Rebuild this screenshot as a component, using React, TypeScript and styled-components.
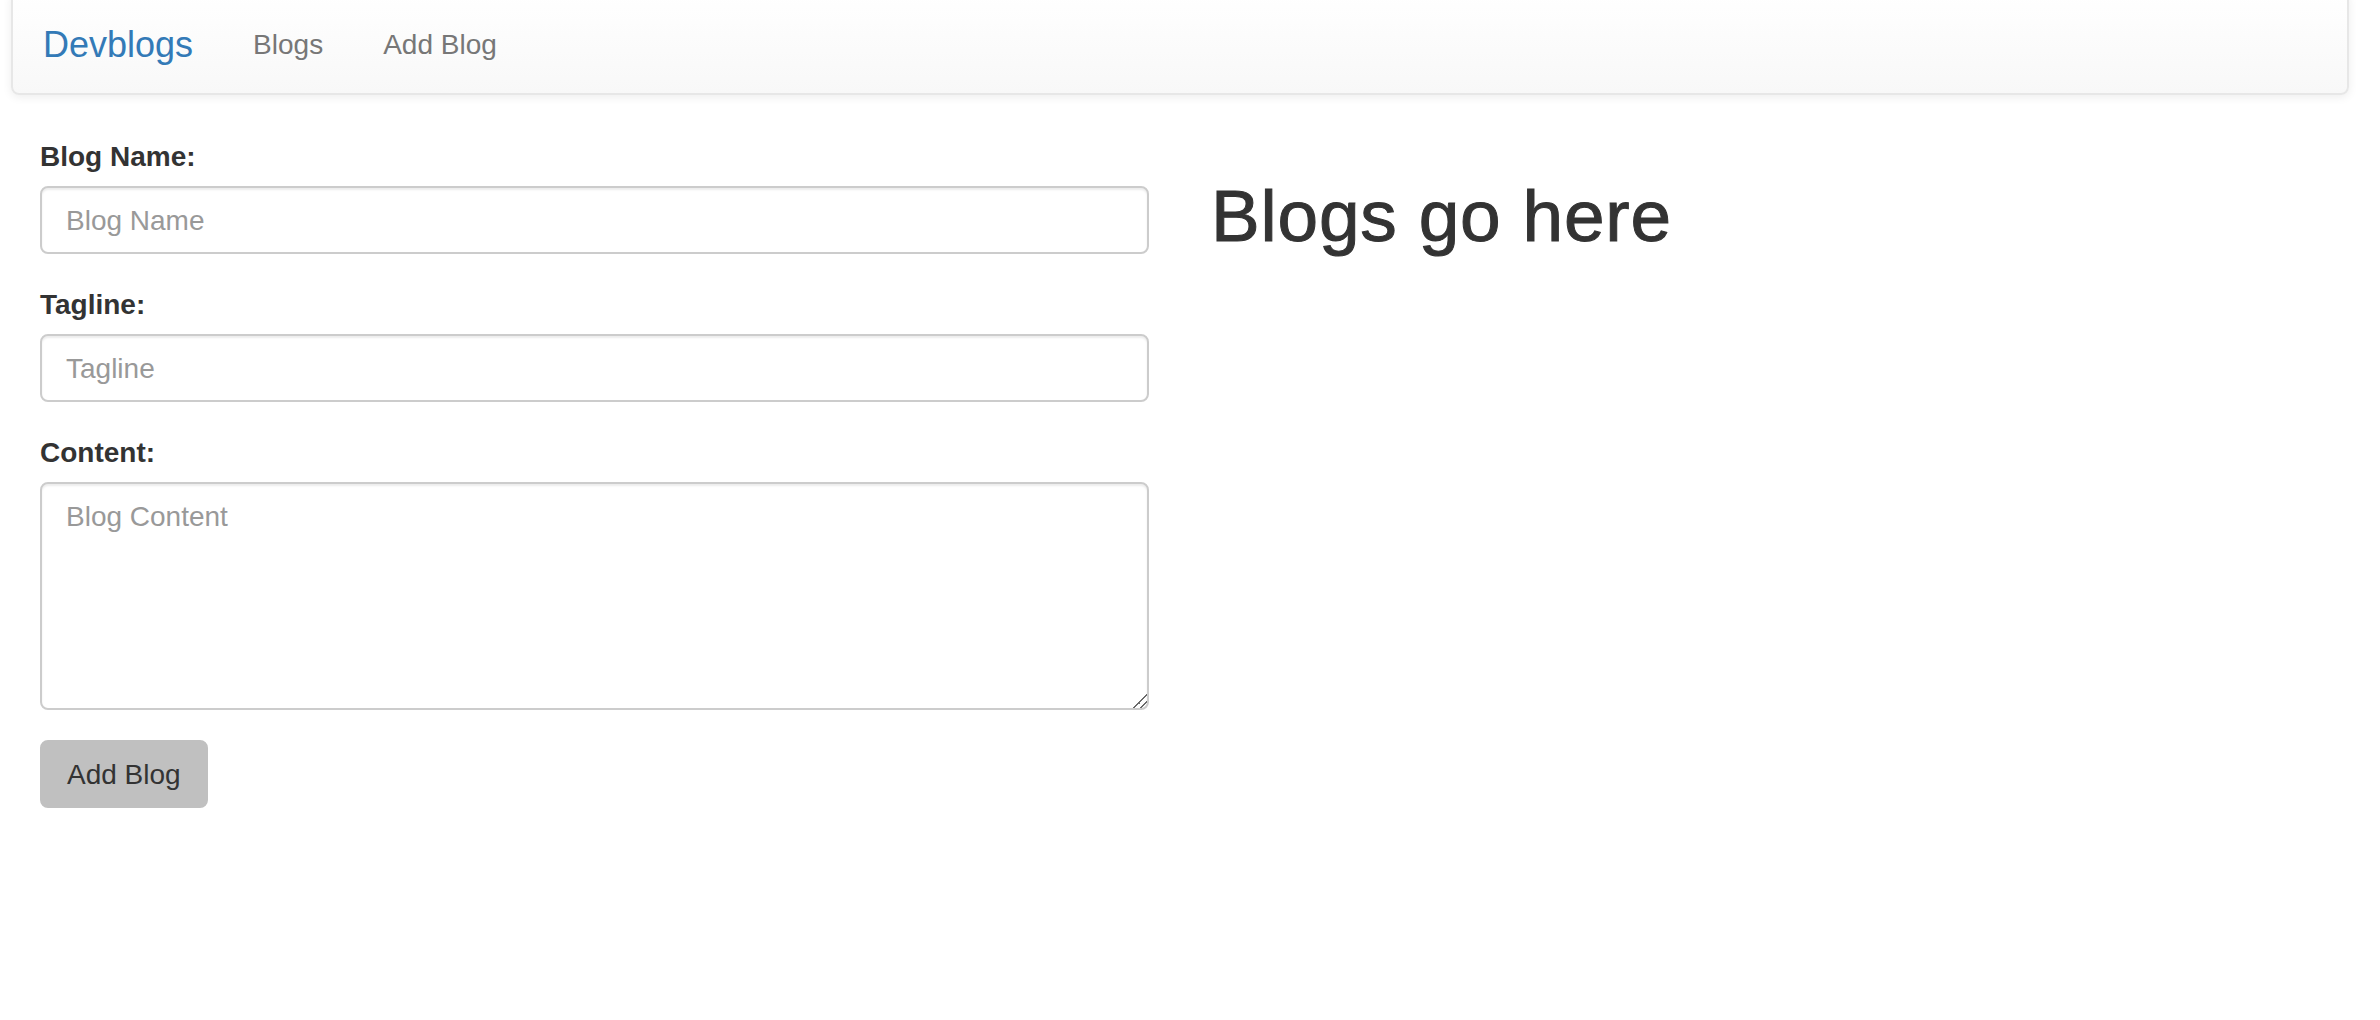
import React from "react";
import styled, { createGlobalStyle } from "styled-components";

const GlobalStyle = createGlobalStyle`
  html, body {
    margin: 0;
    padding: 0;
    background: #fff;
  }
  body {
    font-family: "Liberation Sans", Arial, Helvetica, sans-serif;
    font-size: 28px;
    line-height: 40px;
    color: #333;
  }
  * { box-sizing: border-box; }
`;

const Page = styled.div`
  width: 2380px;
`;

const Navbar = styled.nav`
  display: flex;
  align-items: stretch;
  margin: -9px 0 41px 11px;
  width: 2338px;
  min-height: 104px;
  border: 2px solid #e7e7e7;
  border-radius: 8px;
  background-image: linear-gradient(to bottom, #ffffff 0, #f8f8f8 100%);
  box-shadow: inset 0 2px 0 rgba(255, 255, 255, 0.15), 0 2px 10px rgba(0, 0, 0, 0.075);
`;

const Brand = styled.a`
  display: block;
  height: 100px;
  padding: 32px 30px 28px;
  font-size: 36px;
  line-height: 40px;
  color: #337ab7;
  text-decoration: none;
  text-shadow: 0 2px 0 rgba(255, 255, 255, 0.25);
`;

const NavList = styled.ul`
  display: flex;
  margin: 0;
  padding: 0;
  list-style: none;
`;

const NavLink = styled.a`
  display: block;
  padding: 32px 30px 28px;
  font-size: 28px;
  line-height: 40px;
  color: #777;
  text-decoration: none;
  text-shadow: 0 2px 0 rgba(255, 255, 255, 0.25);
`;

const Main = styled.main`
  display: grid;
  grid-template-columns: 1109px 1fr;
  column-gap: 62px;
  padding-left: 40px;
`;

const Form = styled.form`
  display: flex;
  flex-direction: column;
`;

const FormGroup = styled.div`
  margin-bottom: 30px;
`;

const Label = styled.label`
  display: block;
  margin-bottom: 10px;
  padding-top: 1px;
  height: 40px;
  font-size: 28px;
  line-height: 40px;
  font-weight: bold;
  color: #333;
`;

const fieldStyles = `
  display: block;
  width: 100%;
  padding: 13px 24px 11px;
  font-family: "Liberation Sans", Arial, Helvetica, sans-serif;
  font-size: 28px;
  line-height: 40px;
  color: #555;
  background-color: #fff;
  border: 2px solid #ccc;
  border-radius: 8px;
  box-shadow: inset 0 2px 2px rgba(0, 0, 0, 0.075);
  outline: none;
  &::placeholder {
    color: #999;
    opacity: 1;
  }
`;

const Input = styled.input`
  ${fieldStyles}
  height: 68px;
`;

const TextArea = styled.textarea`
  ${fieldStyles}
  height: 228px;
  resize: vertical;
  margin: 0;
  &::-webkit-resizer {
    background: linear-gradient(
      135deg,
      transparent 0 52%,
      #6a6a6a 52% 60%,
      transparent 60% 74%,
      #6a6a6a 74% 82%,
      transparent 82%
    );
  }
`;

const Button = styled.button`
  align-self: flex-start;
  padding: 13px 25px 11px;
  font-family: "Liberation Sans", Arial, Helvetica, sans-serif;
  font-size: 28px;
  line-height: 40px;
  color: #333;
  background: #c0c0c0;
  border: 2px solid #c0c0c0;
  border-radius: 8px;
  cursor: pointer;
`;

const Heading = styled.h1`
  margin: 40px 0 20px;
  font-size: 73px;
  line-height: 1.1;
  font-weight: 500;
  letter-spacing: 0.8px;
  -webkit-text-stroke: 1px #333;
  color: #333;
`;

export default function App() {
  return (
    <Page>
      <GlobalStyle />
      <Navbar>
        <Brand href="#">Devblogs</Brand>
        <NavList>
          <li>
            <NavLink href="#">Blogs</NavLink>
          </li>
          <li>
            <NavLink href="#">Add Blog</NavLink>
          </li>
        </NavList>
      </Navbar>
      <Main>
        <Form onSubmit={(e) => e.preventDefault()}>
          <FormGroup>
            <Label htmlFor="name">Blog Name:</Label>
            <Input id="name" type="text" placeholder="Blog Name" />
          </FormGroup>
          <FormGroup>
            <Label htmlFor="tagline">Tagline:</Label>
            <Input id="tagline" type="text" placeholder="Tagline" />
          </FormGroup>
          <FormGroup>
            <Label htmlFor="content">Content:</Label>
            <TextArea id="content" rows={5} placeholder="Blog Content" />
          </FormGroup>
          <Button type="submit">Add Blog</Button>
        </Form>
        <div>
          <Heading>Blogs go here</Heading>
        </div>
      </Main>
    </Page>
  );
}
